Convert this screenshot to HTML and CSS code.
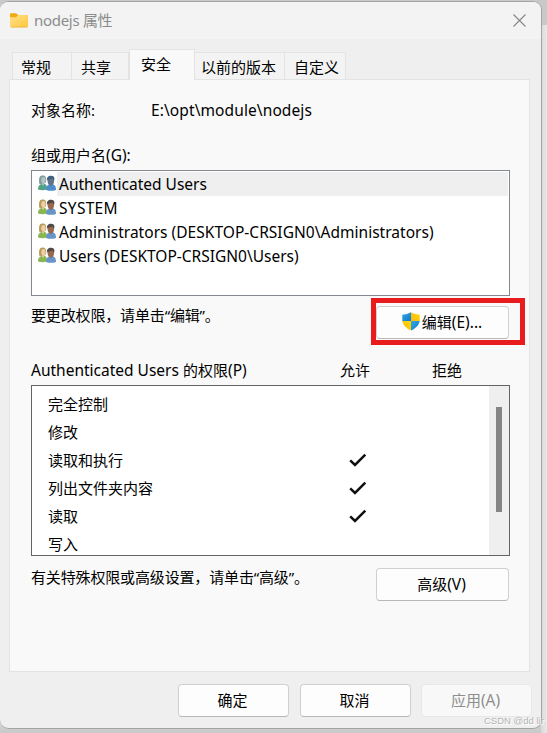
FILE: index.html
```html
<!DOCTYPE html>
<html lang="zh-CN">
<head>
<meta charset="utf-8">
<title>nodejs 属性</title>
<link rel="stylesheet" href="styles.css">
</head>
<body>
<svg width="0" height="0" class="defs">
  <defs>
    <symbol id="people" viewBox="0 0 18 16">
      <path class="shirt-a" d="M0 14.5C0 11.5 1 10 3.5 9L7 9C8.5 10 9 11 9 14.5Q4 16 0 14.5Z"/>
      <path class="hair-a" d="M1.3 8.7C.5 3 1.5.4 4.7.4S8.7 3 8 7.2L5 9.4Z"/>
      <ellipse class="face-a" cx="5.4" cy="5.3" rx="2.2" ry="3.2"/>
      <path class="face-a" d="M3.5 8.5H6.5L5.3 11Z"/>
      <path class="shirt-b" d="M8 15C8 11.5 9.2 10 11.7 9.3H15C17 10 18 11.5 18 15Q13 16.7 8 15Z"/>
      <ellipse class="face-b" cx="12.8" cy="6" rx="3.2" ry="4.3"/>
      <path class="hair-b" d="M9.2 5.5C8.5 2 10.3.6 13.2.7C16.5.8 17 3.2 16 6L14.8 3.6Q12 3.6 9.2 5.5Z"/>
      <path class="face-b" d="M11.5 9H14.6L13 11.5Z"/>
    </symbol>
    <symbol id="check" viewBox="0 0 18 14">
      <path d="M1.2 7.3L6 12L16.3 1.6" fill="none" stroke="#111" stroke-width="2.5"/>
    </symbol>
    <linearGradient id="folderFill" x1="0" y1="0" x2="1" y2="1">
      <stop offset="0" stop-color="#ffe08a"/><stop offset="1" stop-color="#ffc83d"/>
    </linearGradient>
    <linearGradient id="blueFill" x1="0" y1="0" x2="1" y2="1">
      <stop offset="0" stop-color="#35a8e0"/><stop offset="1" stop-color="#0a78d0"/>
    </linearGradient>
    <linearGradient id="yellowFill" x1="1" y1="0" x2="0" y2="1">
      <stop offset="0" stop-color="#ffd800"/><stop offset="1" stop-color="#fcb816"/>
    </linearGradient>
  </defs>
</svg>
<div class="window">
  <header class="titlebar">
    <svg class="folder" viewBox="0 0 18 15">
      <path d="M0 1.5Q0 .2 1.3.2H5.5Q6.3.2 7 1L8.3 2H16.5Q18 2 18 3.4V8H0Z" fill="#f0ab12"/>
      <path d="M0 4.2H6L8.2 2.1H16.6Q18 2.1 18 3.5V12.8Q18 14.2 16.6 14.2H1.4Q0 14.2 0 12.8Z" fill="url(#folderFill)"/>
      <path d="M.6 14.1H17.4" stroke="#e5a524" stroke-width=".6"/>
    </svg>
    <span class="title">nodejs 属性</span>
    <svg class="close" viewBox="0 0 13 13"><path d="M.5.5L12.5 12.5M12.5.5L.5 12.5" stroke="#858585" stroke-width="1.1"/></svg>
  </header>
  <nav class="tabs">
    <span class="tab general">常规</span>
    <span class="tab share">共享</span>
    <span class="tab active">安全</span>
    <span class="tab versions">以前的版本</span>
    <span class="tab custom">自定义</span>
  </nav>
  <main class="panel">
    <div class="object"><span class="key">对象名称:</span><span class="latin path">E:\opt\module\nodejs</span></div>
    <div class="group-label">组或用户名<span class="latin">(G):</span></div>
    <ul class="users">
      <li class="selected"><svg><use href="#people"/></svg><span>Authenticated Users</span></li>
      <li><svg><use href="#people"/></svg><span class="system">SYSTEM</span></li>
      <li><svg><use href="#people"/></svg><span class="long">Administrators (DESKTOP-CRSIGN0\Administrators)</span></li>
      <li><svg><use href="#people"/></svg><span>Users (DESKTOP-CRSIGN0\Users)</span></li>
    </ul>
    <div class="action edit">
      <span>要更改权限，请单击“编辑”。</span>
      <div class="button highlighted">
        <svg class="shield" viewBox="0 0 18 19">
          <path d="M9 .3Q5.5 2.6.3 2.7V9H9Z" fill="url(#blueFill)"/>
          <path d="M9 .3Q12.5 2.6 17.7 2.7V9H9Z" fill="url(#yellowFill)"/>
          <path d="M.3 9H9V18.5Q1.2 15 .3 9Z" fill="url(#yellowFill)"/>
          <path d="M17.7 9H9V18.5Q16.8 15 17.7 9Z" fill="url(#blueFill)"/>
        </svg><span>编辑<span class="latin">(E)...</span></span>
      </div>
    </div>
    <div class="perm-head"><span class="perm-name"><span class="latin">Authenticated Users </span>的权限<span class="latin">(P)</span></span><span class="col">允许</span><span class="col">拒绝</span></div>
    <div class="perms">
      <ul class="rows">
        <li>完全控制</li>
        <li>修改</li>
        <li>读取和执行<svg><use href="#check"/></svg></li>
        <li>列出文件夹内容<svg><use href="#check"/></svg></li>
        <li>读取<svg><use href="#check"/></svg></li>
        <li>写入</li>
      </ul>
      <div class="scrollbar"><div class="thumb"></div></div>
    </div>
    <div class="action advanced">
      <span>有关特殊权限或高级设置，请单击“高级”。</span>
      <div class="button">高级<span class="latin">(V)</span></div>
    </div>
  </main>
  <footer class="footer">
    <div class="button">确定</div>
    <div class="button">取消</div>
    <div class="button disabled">应用<span class="latin">(A)</span></div>
  </footer>
</div>
<div class="watermark">CSDN @dd lir</div>
</body>
</html>
```
FILE: styles.css
```css
* { box-sizing: border-box; }
body {
  margin: 0;
  width: 547px;
  height: 733px;
  overflow: hidden;
  position: relative;
  padding-top: 1px;
  font: 15px/20px "Noto Sans", "Noto Sans CJK SC", sans-serif;
  color: #000;
  background: linear-gradient(#c9c9c9, #c9c9c9) 0 0 / 100% 25px no-repeat,
    linear-gradient(#d8d8d8, #c8c8c8) 0 100% / 541px 14px no-repeat,
    linear-gradient(90deg, #d9d9d9 541px, #e9e9e9 547px);
  white-space: nowrap;
}
ul { list-style: none; margin: 0; padding: 0; }
svg { display: block; flex: none; }
.defs { position: absolute; }
.latin { font-size: 15.5px; }
.window {
  width: 542px;
  height: 728px;
  border: 1px solid #a4a4a4;
  border-left: 0;
  border-radius: 9px;
  background: #efefef;
  overflow: hidden;
}
.titlebar {
  height: 37px;
  display: flex;
  align-items: center;
  padding: 0 15px 0 10px;
  background: #f3f3f3;
  color: #8c8c8c;
}
.folder { width: 18px; height: 15px; }
.title { flex: 1; margin: -2px 0 0 6px; letter-spacing: -.3px; }
.close { width: 13px; height: 13px; margin-top: -1px; }
.tabs { display: flex; align-items: flex-end; height: 40px; padding-left: 12px; }
.tab {
  height: 27px;
  padding: 4px 0 0 8px;
  background: #f3f3f3;
  border: 1px solid #e3e3e3;
  border-width: 1px 1px 0 0;
}
.general { width: 60px; border-left-width: 1px; }
.share { width: 57px; padding-left: 9px; }
.active {
  position: relative;
  width: 66px;
  height: 31px;
  margin-bottom: -1px;
  border-left-width: 1px;
  padding-left: 11px;
  background: #f9f9f9;
}
.versions { width: 90px; padding-left: 6px; }
.custom { width: 61px; padding-left: 9px; }
.panel {
  width: 521px;
  height: 593px;
  margin-left: 9px;
  padding: 20px 20px 0 21px;
  border: 1px solid #e3e3e3;
  background: #f9f9f9;
}
.object { display: flex; height: 45px; }
.key { width: 120px; }
.path { letter-spacing: .1px; }
.group-label { height: 25px; }
.users {
  width: 479px;
  height: 126px;
  border: 1px solid #828790;
  background: #fff;
  padding: 1px 1px 0 5px;
}
.users li { display: flex; height: 24px; padding-left: 1px; }
.users svg { width: 18px; height: 16px; margin: 3px 1px 0 0; }
.users span { flex: 1; padding: 2px 0 0 2px; font-size: 15.5px; }
.users .system { letter-spacing: .3px; }
.users .long { letter-spacing: .03px; }
.selected span { background: #efefef; }
.shirt-a { fill: var(--shirt-a, #87b653); }
.hair-a { fill: var(--hair-a, #b59b55); }
.face-a { fill: var(--face-a, #efcda8); }
.shirt-b { fill: var(--shirt-b, #6795c8); }
.face-b { fill: var(--face-b, #96694e); }
.hair-b { fill: var(--hair-b, #4e4948); }
.selected {
  --shirt-a: #4fa184;
  --hair-a: #7f9a98;
  --face-a: #b4c3c8;
  --shirt-b: #4f8ccb;
  --face-b: #5f7488;
  --hair-b: #3b5f7c;
}
.action { display: flex; justify-content: space-between; width: 478px; }
.edit { height: 65px; padding-top: 10px; }
.edit > span, .advanced > span { margin-top: -1px; letter-spacing: -.15px; }
.button {
  width: 133px;
  height: 33px;
  display: flex;
  align-items: center;
  justify-content: center;
  padding: 0 2px 2px 0;
  background: #fdfdfd;
  border: 1px solid #d0d0d0;
  border-bottom-color: #b8b8b8;
  border-radius: 4px;
}
.highlighted { position: relative; padding-right: 1px; }
.highlighted::after {
  content: "";
  position: absolute;
  inset: -9px -17px -7px -6px;
  border: 5px solid #e81c1c;
}
.shield { width: 18px; height: 19px; margin-right: 2px; }
.perm-head { display: flex; height: 24px; margin-top: -1px; margin-bottom: 1px; }
.perm-name { flex: none; width: 309px; }
.col { flex: none; width: 92px; }
.col:last-child { width: 60px; }
.perms {
  display: flex;
  width: 479px;
  height: 171px;
  border: 1px solid #646464;
  background: #fff;
  overflow: hidden;
}
.rows { flex: 1; padding: 4px 0 0 16px; }
.rows li { height: 28px; line-height: 28px; display: grid; grid-template-columns: 301px 18px; align-items: center; }
.rows svg { width: 18px; height: 14px; }
.scrollbar { width: 20px; background: #efefef; padding: 21px 0 0 7px; }
.thumb { width: 6px; height: 105px; background: #858585; }
.advanced { padding-top: 12px; }
.footer { display: flex; gap: 11px; padding: 12px 0 0 178px; }
.footer .button { width: 111px; flex: none; }
.footer .disabled { margin-left: -1px; color: #8d8d8d; background: #f8f8f8; border-color: #e8e8e8; }
.watermark {
  position: absolute;
  left: 484px;
  top: 714px;
  font: 9.5px/14px "Liberation Sans", sans-serif;
  color: #b5b5b5;
  text-shadow: 1px 1px 0 #fff;
}
```
